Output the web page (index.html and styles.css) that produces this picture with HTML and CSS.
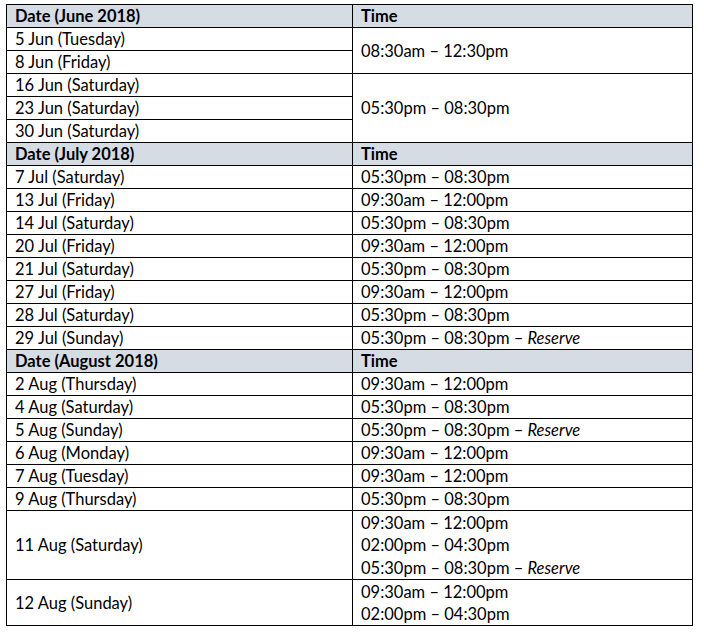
FILE: index.html
```html
<!DOCTYPE html>
<html>
<head>
<meta charset="utf-8">
<link rel="stylesheet" href="styles.css">
</head>
<body>
<div class="page">
<table class="sched">
  <colgroup><col class="c1"><col class="c2"></colgroup>
  <tr class="head"><td>Date (June 2018)</td><td>Time</td></tr>
  <tr><td>5 Jun (Tuesday)</td><td rowspan="2">08:30am – 12:30pm</td></tr>
  <tr><td>8 Jun (Friday)</td></tr>
  <tr><td>16 Jun (Saturday)</td><td rowspan="3">05:30pm – 08:30pm</td></tr>
  <tr><td>23 Jun (Saturday)</td></tr>
  <tr><td>30 Jun (Saturday)</td></tr>
  <tr class="head"><td>Date (July 2018)</td><td>Time</td></tr>
  <tr><td>7 Jul (Saturday)</td><td>05:30pm – 08:30pm</td></tr>
  <tr><td>13 Jul (Friday)</td><td>09:30am – 12:00pm</td></tr>
  <tr><td>14 Jul (Saturday)</td><td>05:30pm – 08:30pm</td></tr>
  <tr><td>20 Jul (Friday)</td><td>09:30am – 12:00pm</td></tr>
  <tr><td>21 Jul (Saturday)</td><td>05:30pm – 08:30pm</td></tr>
  <tr><td>27 Jul (Friday)</td><td>09:30am – 12:00pm</td></tr>
  <tr><td>28 Jul (Saturday)</td><td>05:30pm – 08:30pm</td></tr>
  <tr><td>29 Jul (Sunday)</td><td>05:30pm – 08:30pm – <em>Reserve</em></td></tr>
  <tr class="head"><td>Date (August 2018)</td><td>Time</td></tr>
  <tr><td>2 Aug (Thursday)</td><td>09:30am – 12:00pm</td></tr>
  <tr><td>4 Aug (Saturday)</td><td>05:30pm – 08:30pm</td></tr>
  <tr><td>5 Aug (Sunday)</td><td>05:30pm – 08:30pm – <em>Reserve</em></td></tr>
  <tr><td>6 Aug (Monday)</td><td>09:30am – 12:00pm</td></tr>
  <tr><td>7 Aug (Tuesday)</td><td>09:30am – 12:00pm</td></tr>
  <tr><td>9 Aug (Thursday)</td><td>05:30pm – 08:30pm</td></tr>
  <tr class="multi"><td>11 Aug (Saturday)</td><td><div class="line">09:30am – 12:00pm</div><div class="line">02:00pm – 04:30pm</div><div class="line">05:30pm – 08:30pm – <em>Reserve</em></div></td></tr>
  <tr class="multi"><td>12 Aug (Sunday)</td><td><div class="line">09:30am – 12:00pm</div><div class="line">02:00pm – 04:30pm</div></td></tr>
</table>
</div>
</body>
</html>
```
FILE: styles.css
```css
html, body {
  margin: 0;
  padding: 0;
  background: #ffffff;
}
.page {
  padding: 4px 0 0 6px;
}
.sched {
  border-collapse: collapse;
  width: 687px;
  table-layout: fixed;
  font-family: "Lato", "Liberation Sans", sans-serif;
  font-size: 16.5px;
  color: #000;
}
.sched .c1 { width: 346px; }
.sched td {
  border: 1px solid #000;
  padding: 1px 8px 0;
  height: 21px;
  line-height: 21px;
  vertical-align: middle;
  white-space: nowrap;
}
.sched .head td {
  background: #d5dce4;
  font-weight: bold;
}
.sched .line {
  height: 22.3px;
  line-height: 22.3px;
}
.sched em {
  font-style: italic;
}
```
